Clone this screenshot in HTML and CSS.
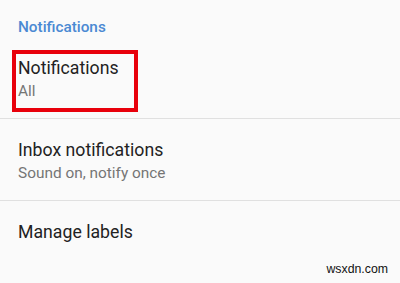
FILE: index.html
```html
<!DOCTYPE html>
<html lang="en">
<head>
    <meta charset="UTF-8">
    <meta name="viewport" content="width=device-width, initial-scale=1.0">
    <title>Settings</title>
    <link rel="stylesheet" href="styles.css">
</head>
<body>
    <div class="settings">
        <div class="section-title">Notifications</div>

        <div class="item">
            <div class="item-title">Notifications</div>
            <div class="item-sub">All</div>
            <div class="highlight"></div>
        </div>

        <div class="item">
            <div class="item-title">Inbox notifications</div>
            <div class="item-sub">Sound on, notify once</div>
        </div>

        <div class="item last">
            <div class="item-title">Manage labels</div>
        </div>
    </div>

    <div class="watermark">wsxdn.com</div>
</body>
</html>
```

FILE: styles.css
```css
* {
    margin: 0;
    padding: 0;
    box-sizing: border-box;
}

body {
    background: #fafafa;
    font-family: 'Roboto', 'Noto Sans', sans-serif;
    width: 400px;
    height: 283px;
    overflow: hidden;
    position: relative;
}

.section-title {
    height: 37px;
    padding: 18px 18px 0;
    font-size: 15.3px;
    line-height: 18px;
    font-weight: 500;
    color: #4a89d3;
}

.item {
    position: relative;
    height: 82px;
    padding: 20px 18px 0;
    border-bottom: 1px solid #e0e0e0;
}

.item.last {
    border-bottom: none;
}

.item-title {
    font-size: 17.7px;
    line-height: 22px;
    color: #222;
}

.item-sub {
    font-size: 15.4px;
    line-height: 24px;
    color: #757575;
}

.highlight {
    position: absolute;
    top: 13px;
    left: 12px;
    width: 126px;
    height: 62px;
    border: 4px solid #e8000b;
}

.watermark {
    position: absolute;
    right: 12px;
    bottom: 7px;
    font-family: 'Liberation Sans', Arial, sans-serif;
    font-size: 12.3px;
    color: #111;
}
```
